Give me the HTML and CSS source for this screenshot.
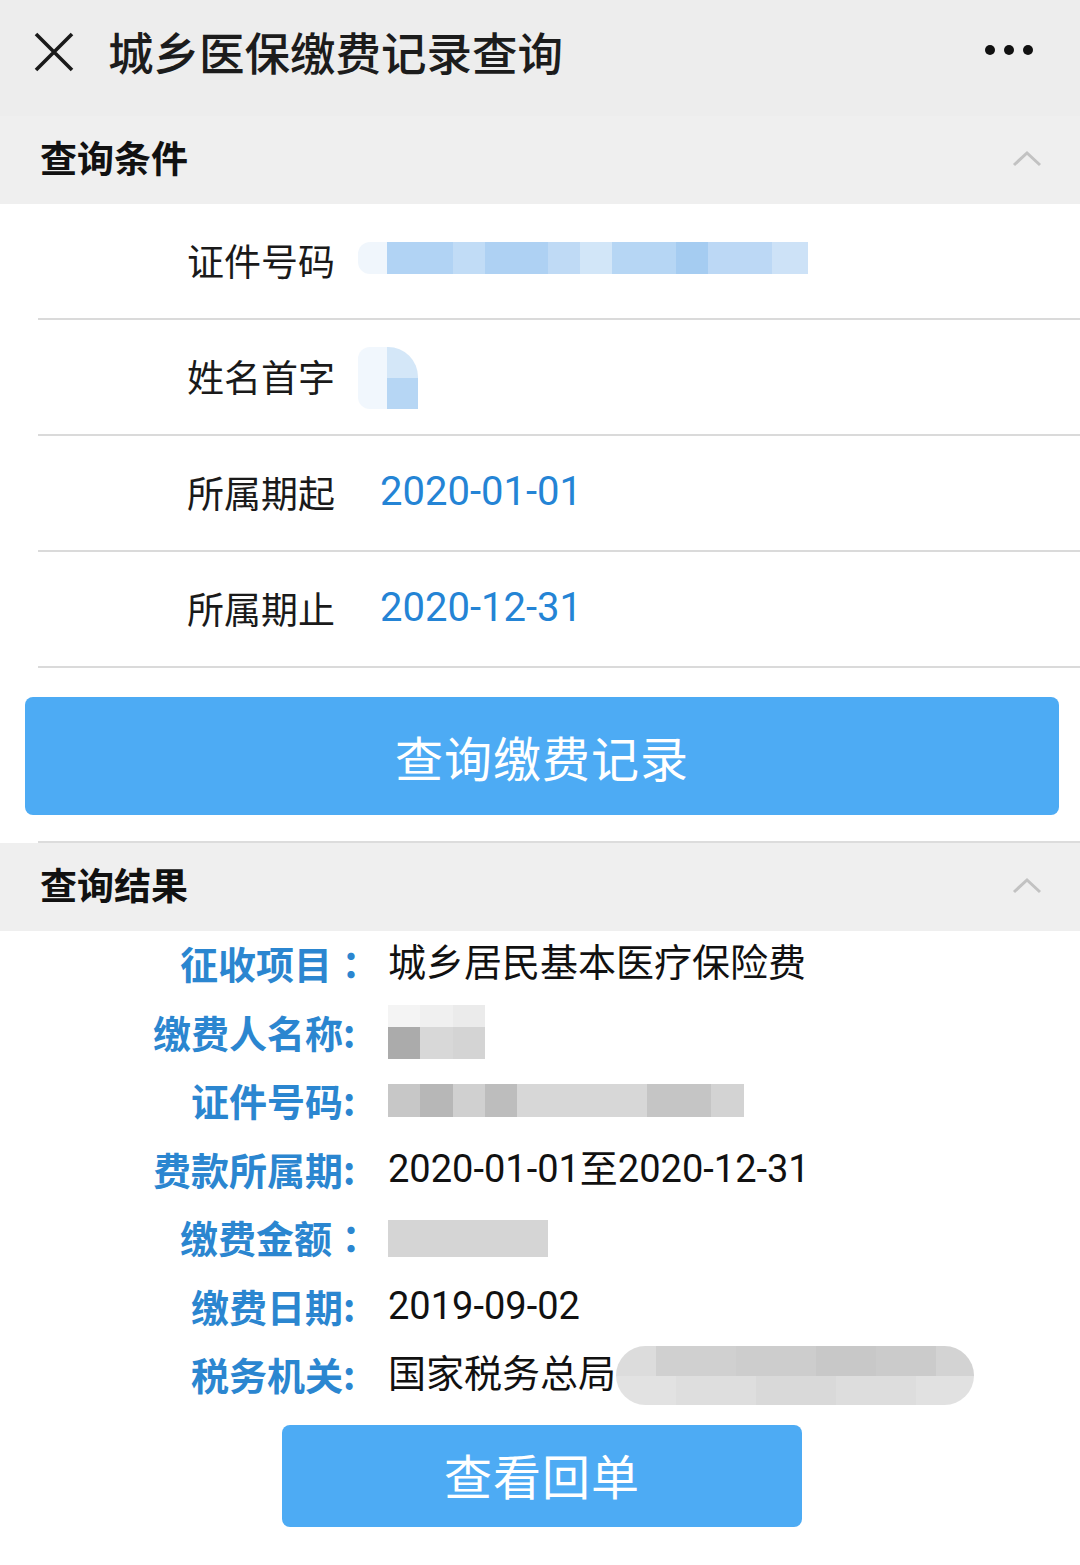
FILE: index.html
```html
<!DOCTYPE html>
<html lang="zh-CN">
<head>
    <meta charset="UTF-8">
    <meta name="viewport" content="width=device-width, initial-scale=1.0">
    <title>城乡医保缴费记录查询</title>
    <link rel="stylesheet" href="styles.css">
</head>
<body>
    <header class="topbar">
        <svg class="close" width="40" height="40" viewBox="0 0 40 40">
            <path d="M2 2 L38 38 M38 2 L2 38" stroke="#1a1a1a" stroke-width="3.6" fill="none"/>
        </svg>
        <h1 class="title">城乡医保缴费记录查询</h1>
        <svg class="more" width="52" height="12" viewBox="0 0 52 12">
            <circle cx="6" cy="6" r="5" fill="#111"/>
            <circle cx="25" cy="6" r="5" fill="#111"/>
            <circle cx="44" cy="6" r="5" fill="#111"/>
        </svg>
    </header>

    <section>
        <div class="panel-head">
            <h2>查询条件</h2>
            <svg class="chevron" width="30" height="18" viewBox="0 0 30 18">
                <path d="M2 16 L15 4 L28 16" stroke="#c2c2c2" stroke-width="3" fill="none"/>
            </svg>
        </div>
        <div class="form">
            <div class="row">
                <span class="label">证件号码</span>
                <span class="mask mask-id"></span>
            </div>
            <div class="row">
                <span class="label">姓名首字</span>
                <span class="mask mask-name"></span>
            </div>
            <div class="row">
                <span class="label">所属期起</span>
                <span class="date">2020-01-01</span>
            </div>
            <div class="row">
                <span class="label">所属期止</span>
                <span class="date">2020-12-31</span>
            </div>
        </div>
        <button class="btn btn-query">查询缴费记录</button>
        <div class="rule"></div>
    </section>

    <section>
        <div class="panel-head">
            <h2>查询结果</h2>
            <svg class="chevron" width="30" height="18" viewBox="0 0 30 18">
                <path d="M2 16 L15 4 L28 16" stroke="#c2c2c2" stroke-width="3" fill="none"/>
            </svg>
        </div>
        <div class="result">
            <span class="key">征收项目<span class="colon wide">：</span></span>
            <span class="val">城乡居民基本医疗保险费</span>

            <span class="key">缴费人名称<span class="colon">:</span></span>
            <span class="val"><span class="mask mask-payer"></span></span>

            <span class="key">证件号码<span class="colon">:</span></span>
            <span class="val"><span class="mask mask-card"></span></span>

            <span class="key">费款所属期<span class="colon">:</span></span>
            <span class="val">2020-01-01至2020-12-31</span>

            <span class="key">缴费金额<span class="colon wide">：</span></span>
            <span class="val"><span class="mask mask-amount"></span></span>

            <span class="key">缴费日期<span class="colon">:</span></span>
            <span class="val">2019-09-02</span>

            <span class="key">税务机关<span class="colon">:</span></span>
            <span class="val">国家税务总局<span class="mask mask-office"></span></span>
        </div>
        <button class="btn btn-receipt">查看回单</button>
    </section>
</body>
</html>
```

FILE: styles.css
```css
body{
    margin: 0;
    background-color: #fff;
    font-family: "Roboto", "Noto Sans CJK SC", sans-serif;
    color: #111;
}

.topbar{
    display: flex;
    align-items: center;
    height: 116px;
    padding: 0 44px 0 34px;
    background-color: #ededed;
    box-sizing: border-box;
}
.close{
    margin-top: -12px;
}
.title{
    flex: 1;
    margin: -14px 0 0 34px;
    font-size: 45.5px;
    font-weight: 500;
    color: #1c1c1c;
}
.more{
    margin-top: -16px;
}

.panel-head{
    display: flex;
    align-items: center;
    justify-content: space-between;
    height: 88px;
    padding: 0 38px 0 40px;
    background-color: #efefef;
}
.panel-head h2{
    margin: -6px 0 0 0;
    font-size: 37px;
    font-weight: 700;
    color: #111;
}
.chevron{
    margin-top: -4px;
}

.form{
    margin-left: 38px;
}
.row{
    display: flex;
    align-items: center;
    height: 114px;
    padding-left: 149px;
    border-bottom: 2px solid #dadada;
}
.label{
    width: 150px;
    font-size: 37px;
    color: #1a1a1a;
    margin-top: -2px;
}
.date{
    margin-left: 43px;
    font-size: 40px;
    color: #2484d5;
    margin-top: -4px;
}

.mask{
    display: inline-block;
    vertical-align: middle;
}
.mask-id{
    margin: -6px 0 0 21px;
    width: 450px;
    height: 32px;
    background: linear-gradient(90deg, #f0f6fc 0 29px, #b1d3f4 29px 95px, #c1dcf6 95px 127px, #aed1f3 127px 190px, #bfdaf5 190px 222px, #d2e6f8 222px 254px, #b6d6f4 254px 318px, #a5ccf1 318px 350px, #bcd8f5 350px 414px, #cde2f7 414px 450px);
    border-radius: 12px 0 0 12px;
}
.mask-name{
    margin: 2px 0 0 21px;
    width: 60px;
    height: 62px;
    background:
        linear-gradient(180deg, #d4e7f8 0 31px, #b6d6f4 31px 62px) right / 31px 62px no-repeat,
        #f1f7fd;
    border-radius: 12px 30px 0 12px;
}

.btn{
    display: block;
    border: none;
    border-radius: 8px;
    background-color: #4dabf4;
    color: #fff;
    font-family: "Noto Sans CJK SC", sans-serif;
    font-size: 48px;
    letter-spacing: 1px;
    cursor: pointer;
}
.btn-query{
    width: 1034px;
    height: 118px;
    margin: 29px 0 0 25px;
}
.rule{
    margin: 26px 0 0 38px;
    border-top: 2px solid #dcdcdc;
}

.result{
    display: grid;
    grid-template-columns: 360px 1fr;
    column-gap: 28px;
    line-height: 68.5px;
    margin-top: -2px;
}
.key{
    text-align: right;
    font-family: "Noto Sans CJK SC", sans-serif;
    font-size: 38px;
    font-weight: 700;
    color: #2b86d0;
}
.colon{
    display: inline-block;
    width: 17px;
    text-align: left;
}
.colon.wide{
    width: 38px;
    text-align: center;
    margin-right: -10px;
    font-family: "Noto Sans CJK TC", sans-serif;
}
.val{
    font-size: 38px;
    color: #111;
    white-space: nowrap;
}
.mask-payer{
    width: 97px;
    height: 54px;
    margin-top: -4px;
    background:
        linear-gradient(90deg, #ababab 0 32px, #d8d8d8 32px 65px, #d4d4d4 65px 97px) bottom / 97px 32px no-repeat,
        linear-gradient(90deg, #f4f4f4 0 32px, #f0f0f0 32px 65px, #ebebeb 65px 97px) top / 97px 22px no-repeat;
}
.mask-card{
    width: 356px;
    height: 33px;
    margin-top: -4px;
    background: linear-gradient(90deg, #c7c7c7 0 32px, #b7b7b7 32px 65px, #d0d0d0 65px 97px, #bdbdbd 97px 129px, #d7d7d7 129px 259px, #c5c5c5 259px 323px, #d3d3d3 323px 356px);
}
.mask-amount{
    width: 160px;
    height: 37px;
    margin-top: -2px;
    background-color: #d5d5d5;
}
.mask-office{
    width: 358px;
    height: 59px;
    margin-top: -2px;
    border-radius: 30px;
    background:
        linear-gradient(90deg, #dcdcdc 0 40px, #d0d0d0 40px 120px, #cdcdcd 120px 200px, #c8c8c8 200px 260px, #cbcbcb 260px 320px, #d3d3d3 320px 358px) top / 358px 30px no-repeat,
        linear-gradient(90deg, #e2e2e2 0 60px, #dedede 60px 140px, #d9d9d9 140px 220px, #dddddd 220px 300px, #e1e1e1 300px 358px) bottom / 358px 29px no-repeat;
}

.btn-receipt{
    width: 520px;
    height: 102px;
    margin: 16px 0 0 282px;
    padding-bottom: 4px;
}
```
